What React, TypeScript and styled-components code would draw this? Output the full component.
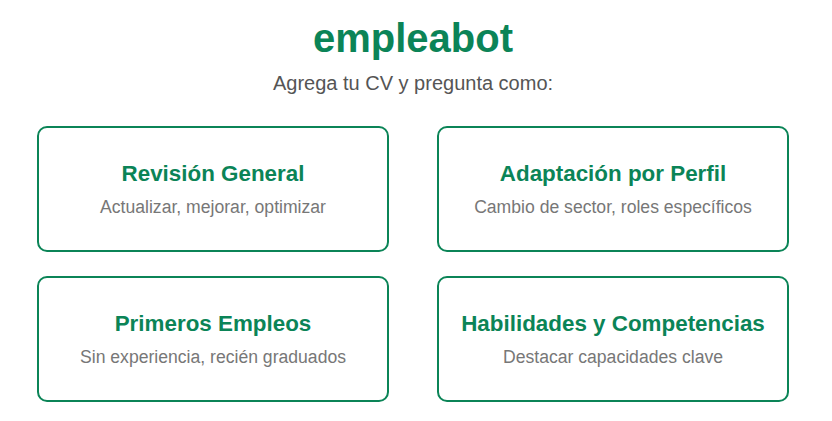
import { createGlobalStyle } from 'styled-components';
import styled from 'styled-components';

const GlobalStyle = createGlobalStyle`
  html, body {
    margin: 0;
    padding: 0;
    background: #ffffff;
    font-family: 'Liberation Sans', Arial, sans-serif;
  }
`;

const Page = styled.div`
  width: 752px;
  padding: 15px 43px 0 37px;
  display: flex;
  flex-direction: column;
  align-items: center;
`;

const Title = styled.h1`
  margin: 0;
  font-size: 40px;
  font-weight: bold;
  line-height: 46px;
  color: #0b8457;
`;

const Lead = styled.p`
  margin: 10px 0 0;
  font-size: 20px;
  line-height: 24px;
  color: #555555;
`;

const Grid = styled.div`
  margin-top: 31px;
  width: 100%;
  display: grid;
  grid-template-columns: 1fr 1fr;
  column-gap: 48px;
  row-gap: 24px;
`;

const Card = styled.div`
  box-sizing: border-box;
  height: 126px;
  border: 2px solid #0b8457;
  border-radius: 10px;
  background: #ffffff;
  display: flex;
  flex-direction: column;
  align-items: center;
  justify-content: center;
  cursor: pointer;
`;

const CardTitle = styled.h3`
  margin: 0;
  font-size: 22.4px;
  font-weight: bold;
  line-height: 26px;
  color: #0b8457;
`;

const CardText = styled.p`
  margin: 10px 0 0;
  font-size: 17.6px;
  line-height: 21px;
  color: #777777;
`;

const options = [
  { title: 'Revisión General', text: 'Actualizar, mejorar, optimizar' },
  { title: 'Adaptación por Perfil', text: 'Cambio de sector, roles específicos' },
  { title: 'Primeros Empleos', text: 'Sin experiencia, recién graduados' },
  { title: 'Habilidades y Competencias', text: 'Destacar capacidades clave' },
];

export default function App() {
  return (
    <>
      <GlobalStyle />
      <Page>
        <Title>empleabot</Title>
        <Lead>Agrega tu CV y pregunta como:</Lead>
        <Grid>
          {options.map((o) => (
            <Card key={o.title}>
              <CardTitle>{o.title}</CardTitle>
              <CardText>{o.text}</CardText>
            </Card>
          ))}
        </Grid>
      </Page>
    </>
  );
}
